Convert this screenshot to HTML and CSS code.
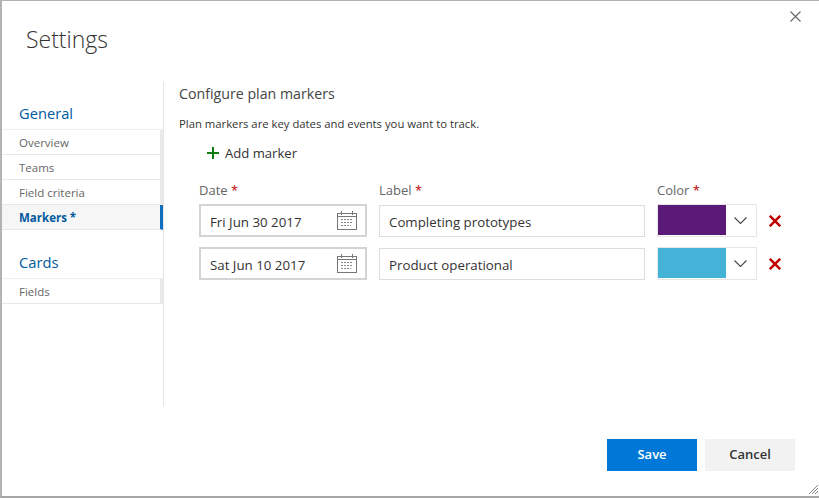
FILE: index.html
```html
<!DOCTYPE html>
<html lang="en">
<head>
<meta charset="utf-8">
<title>Settings</title>
<link rel="stylesheet" href="styles.css">
</head>
<body>
<div class="dialog">
  <button class="close" aria-label="Close">
    <svg width="11" height="11" viewBox="0 0 11 11"><path d="M0.5 0.5L10.5 10.5M10.5 0.5L0.5 10.5" stroke="#666" stroke-width="1.1" fill="none"/></svg>
  </button>
  <h1 class="title">Settings</h1>
  <div class="body">
    <nav class="side">
      <h2 class="side-head">General</h2>
      <ul class="side-list">
        <li class="side-item">Overview</li>
        <li class="side-item">Teams</li>
        <li class="side-item">Field criteria</li>
        <li class="side-item is-active">Markers *</li>
      </ul>
      <h2 class="side-head side-head-next">Cards</h2>
      <ul class="side-list">
        <li class="side-item">Fields</li>
      </ul>
    </nav>
    <main class="main">
      <h3 class="main-title">Configure plan markers</h3>
      <p class="main-desc">Plan markers are key dates and events you want to track.</p>
      <div class="add">
        <svg width="12" height="12" viewBox="0 0 12 12"><path d="M6 0V12M0 6H12" stroke="#107c10" stroke-width="2" fill="none"/></svg>
        <span>Add marker</span>
      </div>
      <div class="grid">
        <div class="lab">Date <b>*</b></div>
        <div class="lab">Label <b>*</b></div>
        <div class="lab">Color <b>*</b></div>
        <div></div>

        <div class="date"><span class="val">Fri Jun 30 2017</span>
          <svg class="cal" width="20" height="19" viewBox="0 0 20 19"><use href="#cal"/></svg>
        </div>
        <div class="text"><span class="val">Completing prototypes</span></div>
        <div class="color"><span class="swatch purple"></span>
          <svg class="chev" width="13" height="7" viewBox="0 0 13 7"><path d="M0.5 0.5L6.5 6.5L12.5 0.5" stroke="#444" stroke-width="1.1" fill="none"/></svg>
        </div>
        <svg class="del" width="12" height="12" viewBox="0 0 12 12"><path d="M0.8 0.8L11.2 11.2M11.2 0.8L0.8 11.2" stroke="#c00000" stroke-width="2.5" fill="none"/></svg>

        <div class="date"><span class="val">Sat Jun 10 2017</span>
          <svg class="cal" width="20" height="19" viewBox="0 0 20 19"><use href="#cal"/></svg>
        </div>
        <div class="text"><span class="val">Product operational</span></div>
        <div class="color"><span class="swatch blue"></span>
          <svg class="chev" width="13" height="7" viewBox="0 0 13 7"><path d="M0.5 0.5L6.5 6.5L12.5 0.5" stroke="#444" stroke-width="1.1" fill="none"/></svg>
        </div>
        <svg class="del" width="12" height="12" viewBox="0 0 12 12"><path d="M0.8 0.8L11.2 11.2M11.2 0.8L0.8 11.2" stroke="#c00000" stroke-width="2.5" fill="none"/></svg>
      </div>
    </main>
  </div>
  <div class="foot">
    <button class="btn save">Save</button>
    <button class="btn cancel">Cancel</button>
  </div>
  <svg class="grip" width="11" height="11" viewBox="0 0 11 11"><path d="M1 10L10 1M4 10L10 4M7 10L10 7" stroke="#888" stroke-width="1" fill="none"/></svg>
</div>
<svg class="defs" width="0" height="0">
  <defs>
    <g id="cal" fill="none" stroke="#777">
      <rect x="0.5" y="2.5" width="19" height="16"/>
      <path d="M0.5 5.5H19.5M4.5 0V4M15.5 0V4"/>
      <path d="M4 8.5H16M4 11.5H16M4 14.5H14" stroke-dasharray="2 1" stroke="#888"/>
    </g>
  </defs>
</svg>
</body>
</html>
```
FILE: styles.css
```css
* { box-sizing: border-box; }
html, body { margin: 0; padding: 0; background: #fff; }
body { width: 819px; height: 498px; overflow: hidden; font-family: "Open Sans", "Noto Sans", sans-serif; color: #333; }
.dialog {
  position: relative;
  width: 819px;
  height: 498px;
  border-left: 2px solid #b3b3b3;
  border-top: 1px solid #b3b3b3;
  border-bottom: 2px solid #a6a6a6;
  background: #fff;
  display: flex;
  flex-direction: column;
}
.close { position: absolute; top: 10px; right: 18px; width: 11px; height: 11px; padding: 0; border: 0; background: none; display: flex; }
.title { margin: 20px 0 0 24px; font-size: 23px; line-height: 36px; font-weight: 300; color: #333; height: 61px; }
.body { display: flex; height: 324px; }
.side { width: 162px; border-right: 1px solid #e6e6e6; padding-top: 19px; }
.side-head { margin: 0 0 0 17px; font-size: 14.7px; line-height: 24px; font-weight: 400; color: #005a9e; height: 28px; }
.side-head-next { margin-top: 20px; }
.side-list { list-style: none; margin: 0; padding: 0; border-top: 1px solid #eee; }
.side-item {
  height: 25px;
  padding-left: 17px;
  padding-top: 1px;
  font-size: 11.5px;
  line-height: 24px;
  color: #666;
  border-bottom: 1px solid #e8e8e8;
  border-right: 3px solid #eaeaea;
}
.side-item.is-active { font-weight: 700; color: #005a9e; background: #f6f6f6; border-right-color: #106ebe; }
.main { flex: 1; padding: 1px 0 0 15px; }
.main-title { margin: 0; font-size: 14.2px; line-height: 22px; font-weight: 400; color: #444; }
.main-desc { margin: 10px 0 0; font-size: 11.3px; line-height: 18px; color: #333; }
.add { display: flex; align-items: center; gap: 6px; margin: 10px 0 0 28px; height: 20px; font-size: 13.1px; color: #333; }
.grid { display: grid; grid-template-columns: 168px 266px 100px 12px; column-gap: 12px; margin: 18px 0 0 20px; align-items: center; row-gap: 10px; }
.lab { font-size: 13px; line-height: 18px; color: #666; margin-bottom: -10px; height: 23px; }
.lab b { color: #c00000; font-weight: 400; }
.date { height: 33px; border: 2px solid #d4d4d4; display: flex; align-items: center; justify-content: space-between; padding: 0 8px 0 9px; font-size: 13.3px; color: #333; }
.text { height: 32px; margin-top: 1px; border: 1px solid #ddd; display: flex; align-items: center; padding-left: 9px; font-size: 13.3px; color: #333; }
.val { padding-top: 2px; }
.color { height: 33px; border: 1px solid #e6e6e6; display: flex; align-items: flex-start; }
.swatch { width: 68px; height: 30px; display: block; }
.purple { background: #5c1a78; }
.blue { background: #45b2d8; }
.chev { margin: 12px 0 0 8px; }
.del { justify-self: start; }
.foot { display: flex; justify-content: flex-end; gap: 8px; padding: 33px 24px 0 0; }
.btn { width: 90px; height: 32px; border: 0; padding: 0 0 2px; font-family: inherit; font-size: 13px; font-weight: 600; }
.save { background: #0078d7; color: #fff; }
.cancel { background: #f2f2f2; color: #333; }
.grip { position: absolute; right: 0; bottom: 1px; }
.defs { position: absolute; }
```
